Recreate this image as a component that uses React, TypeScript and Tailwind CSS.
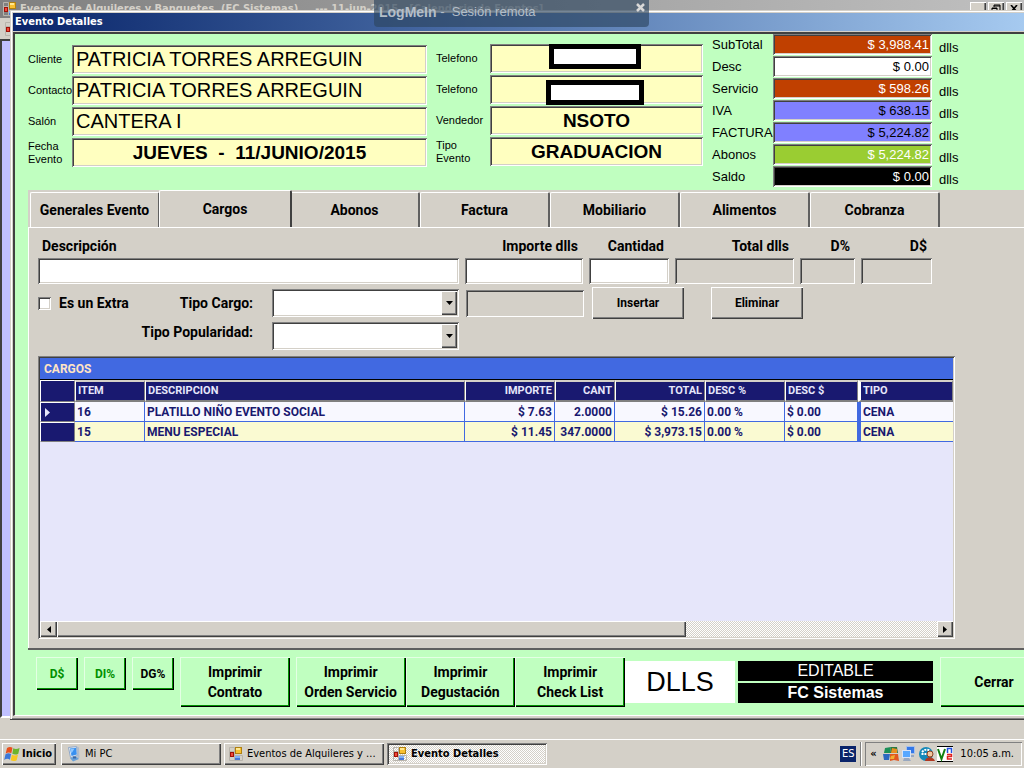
import React from "react";

// classic 3D edges
const raised =
  "bg-[#d4d0c8] shadow-[inset_1px_1px_0_#fff,inset_-1px_-1px_0_#404040,inset_-2px_-2px_0_#808080]";
const sunken =
  "shadow-[inset_1px_1px_0_#808080,inset_-1px_-1px_0_#fff,inset_2px_2px_0_#404040,inset_-2px_-2px_0_#d4d0c8]";
const greenButton =
  "bg-[#c0ffc0] shadow-[inset_1px_1px_0_#e4ffe4,inset_-1px_-1px_0_#000,inset_-2px_-2px_0_#009000]";
const checker = "bg-[repeating-conic-gradient(#fff_0_25%,#d4d0c8_0_50%)] bg-[length:2px_2px]";

const bold = "font-['Roboto','Liberation_Sans',sans-serif] font-bold";
const tahoma = "font-['DejaVu_Sans_Condensed','DejaVu_Sans',sans-serif]";

const clientFields = [
  { id: "cliente", label: "Cliente", value: "PATRICIA TORRES ARREGUIN", style: "pl-[4px] text-[20px]/[24px]" },
  { id: "contacto", label: "Contacto", value: "PATRICIA TORRES ARREGUIN", style: "pl-[4px] text-[20px]/[24px]" },
  { id: "salon", label: "Salón", value: "CANTERA I", style: "pl-[4px] text-[20px]/[24px]" },
  { id: "fecha", label: "Fecha Evento", value: "JUEVES  -  11/JUNIO/2015", style: "text-center text-[19px]/[24px] font-bold" },
];

const saleFields = [
  { id: "tel1", label: "Telefono", value: "", mask: "left-[59px] top-0 w-[92px]" },
  { id: "tel2", label: "Telefono", value: "", mask: "left-[56px] top-[5px] w-[98px]" },
  { id: "vendedor", label: "Vendedor", value: "NSOTO", mask: "" },
  { id: "tipo", label: "Tipo Evento", value: "GRADUACION", mask: "" },
];

const totals = [
  { label: "SubTotal", value: "$ 3,988.41", style: "bg-[#c04000] text-white" },
  { label: "Desc", value: "$ 0.00", style: "bg-white text-black" },
  { label: "Servicio", value: "$ 598.26", style: "bg-[#c04000] text-white" },
  { label: "IVA", value: "$ 638.15", style: "bg-[#8080ff] text-black" },
  { label: "FACTURA", value: "$ 5,224.82", style: "bg-[#8080ff] text-black" },
  { label: "Abonos", value: "$ 5,224.82", style: "bg-[#9acd32] text-white" },
  { label: "Saldo", value: "$ 0.00", style: "bg-black text-white" },
];

const tabs = ["Generales Evento", "Cargos", "Abonos", "Factura", "Mobiliario", "Alimentos", "Cobranza"];

const entryFields = [
  { id: "descripcion", label: "Descripción", style: "flex-1", box: "bg-white", align: "pl-[4px]" },
  { id: "importe", label: "Importe dlls", style: "w-[118px]", box: "bg-white", align: "pr-[5px] text-right" },
  { id: "cantidad", label: "Cantidad", style: "w-[80px]", box: "bg-white", align: "pr-[5px] text-right" },
  { id: "total", label: "Total dlls", style: "w-[119px]", box: "bg-[#d4d0c8]", align: "pr-[5px] text-right" },
  { id: "dpor", label: "D%", style: "w-[55px]", box: "bg-[#d4d0c8]", align: "pr-[5px] text-right" },
  { id: "dpesos", label: "D$", style: "w-[71px]", box: "bg-[#d4d0c8]", align: "pr-[5px] text-right" },
];

const columns = [
  { name: "ITEM", width: "w-[70px]", align: "text-left" },
  { name: "DESCRIPCION", width: "", align: "text-left" },
  { name: "IMPORTE", width: "w-[90px]", align: "text-right" },
  { name: "CANT", width: "w-[60px]", align: "text-right" },
  { name: "TOTAL", width: "w-[90px]", align: "text-right" },
  { name: "DESC %", width: "w-[80px]", align: "text-left" },
  { name: "DESC $", width: "w-[73px]", align: "text-left" },
  { name: "TIPO", width: "w-[95px]", align: "text-left" },
];

const rows = [
  ["16", "PLATILLO NIÑO EVENTO SOCIAL", "$ 7.63", "2.0000", "$ 15.26", "0.00 %", "$ 0.00", "CENA"],
  ["15", "MENU ESPECIAL", "$ 11.45", "347.0000", "$ 3,973.15", "0.00 %", "$ 0.00", "CENA"],
];

const printButtons = [
  ["Imprimir", "Contrato"],
  ["Imprimir", "Orden Servicio"],
  ["Imprimir", "Degustación"],
  ["Imprimir", "Check List"],
];

function AppIcon() {
  return (
    <svg width="14" height="14" viewBox="0 0 14 14" className="shrink-0" aria-hidden="true">
      <path d="M0.500 0.500h5v4h-5zM0.500 4.500h5v9h-5zM5.500 8.500h8v5h-8z" fill="none" stroke="#b8b4ac" />
      <rect x="6.500" y="0.500" width="6" height="6" fill="#f8c030" stroke="#b08010" />
      <rect x="7" y="1" width="4" height="2" fill="#ffe890" />
      <rect x="1" y="5" width="4" height="5" fill="#a01008" />
      <rect x="2" y="6" width="2" height="3" fill="#f04838" />
      <rect x="6" y="9" width="5" height="4" fill="#4878d8" />
      <rect x="6" y="9" width="5" height="2" fill="#80b0f8" />
    </svg>
  );
}

function WindowsFlag() {
  return (
    <svg width="17" height="16" viewBox="0 0 17 16" className="shrink-0" aria-hidden="true">
      <path d="M3 2c2-1.500 4-1.400 5.500-.2L7.300 7.200C5.600 6.100 4 6.200 1.700 7.400z" fill="#e8501c" />
      <path d="M9.300 2.300c1.800 1.100 3.800 1 6.300-.2l-1.300 5.600c-2 1.200-4 1.200-6 .1z" fill="#6cb42c" />
      <path d="M1.500 8.300c2-1.300 3.900-1.200 5.600-.2L5.900 13.700c-1.800-1.200-3.600-1.100-5.700.2z" fill="#3c78d8" />
      <path d="M7.900 8.700c1.900 1.100 3.900 1 6.100-.1l-1.300 5.600c-2 1.200-4 1.200-6 .1z" fill="#f8c820" />
    </svg>
  );
}

function ComputerIcon() {
  return (
    <svg width="15" height="16" viewBox="0 0 15 16" className="shrink-0" aria-hidden="true">
      <path d="M1.500 1.500l8-1 1 9-7 2z" fill="#e8f0f8" stroke="#90a8c8" />
      <path d="M3 2.500l6-.8.800 6.800-5.300 1.500z" fill="#3890f0" />
      <path d="M3.500 3l4-.5-3 5z" fill="#90c8ff" />
      <path d="M10 .5l2 1 .5 10-2 2z" fill="#b0bccc" />
      <path d="M3 12l6-1.500L12 13l-6 2.500z" fill="#68a0d8" />
      <path d="M6 10.500h3v2H6z" fill="#3868a8" />
    </svg>
  );
}

function TrayIcons() {
  return (
    <>
      <svg width="16" height="16" viewBox="0 0 16 16" aria-hidden="true">
        <path d="M2 2l6-1-1 6H1z" fill="#1c9058" />
        <path d="M8 1h6l1 6H7z" fill="#2c7840" />
        <path d="M9 2l5 1v4H8z" fill="#e89020" />
        <path d="M0 8h7l-1 6H1z" fill="#2c68c0" />
        <path d="M7 8h8l1 7-5-1-4 1z" fill="#e05820" />
        <path d="M8 10l4-1-1 4H7z" fill="#f0b030" />
      </svg>
      <svg width="16" height="16" viewBox="0 0 16 16" aria-hidden="true">
        <rect x="5.500" y="0.500" width="8" height="7" fill="#3478e8" stroke="#a8c0e8" />
        <path d="M8 9h5v2H8z" fill="#98a8c0" />
        <rect x="1.500" y="4.500" width="8" height="7" fill="#58a8ff" stroke="#d8e4f8" />
        <path d="M3 12h5l2 3H2z" fill="#98a8c0" />
      </svg>
      <svg width="16" height="16" viewBox="0 0 16 16" aria-hidden="true">
        <circle cx="7" cy="8" r="7" fill="#1488b8" />
        <path d="M3 6c3-3 6-3 8-1M2.500 8h5" stroke="#fff" strokeWidth="2" strokeDasharray="2 1" fill="none" />
        <circle cx="11" cy="8" r="3" fill="#f0c8a0" stroke="#904020" />
        <path d="M6 15c1-5 8-5 10 0z" fill="#b03820" />
      </svg>
      <svg width="16" height="16" viewBox="0 0 16 16" aria-hidden="true">
        <rect width="16" height="16" fill="#fff" />
        <path d="M0 .5h16M0 15.500h16" stroke="#000" />
        <path d="M1 3l3.500 10L8 3" stroke="#108010" strokeWidth="2" fill="none" />
        <path d="M10.500 7V2.500h4V7" stroke="#2050e0" strokeWidth="1.500" fill="none" />
        <path d="M10 8.500h4.500v2h-4V13H15" stroke="#e02020" strokeWidth="1.500" fill="none" />
      </svg>
    </>
  );
}

function ParentWindow() {
  return (
    <div className="absolute inset-x-0 top-0 bottom-[50px] flex flex-col" aria-hidden="true">
      <div className="flex h-[18px] shrink-0 items-start bg-linear-to-r from-[#808080] to-[#c0c0c0] pt-[2px] pl-[3px]">
        <AppIcon />
        <span className={`${tahoma} ml-[3px] whitespace-pre text-[11px]/[14px] font-bold text-[#d4d0c8]`}>
          {"Eventos de Alquileres y Banquetes  (FC Sistemas)     --- 11-jun-2015 - [Calendario de Eventos]"}
        </span>
        <div className="ml-auto flex gap-[2px] pr-[2px]">
          <span className={`${raised} h-[14px] w-[16px]`} />
          <span className={`${raised} flex h-[14px] w-[16px] justify-center pt-[2px]`}>
            <svg width="10" height="9" viewBox="0 0 10 9">
              <path d="M3 1h6v5M3 1v2M1 4h5v4H1zM3 2h6M1 4.500h5" stroke="#000" fill="none" />
            </svg>
          </span>
          <span className={`${raised} flex h-[14px] w-[16px] justify-center pt-[3px]`}>
            <svg width="8" height="7" viewBox="0 0 8 7">
              <path d="M1 0l6 7M7 0L1 7" stroke="#000" strokeWidth="1.600" />
            </svg>
          </span>
        </div>
      </div>
      <div className="flex h-[21px] shrink-0 items-center pl-[5px]">
        <AppIcon />
      </div>
      <div className="flex-1 border-2 border-t-[#404040] border-r-white border-b-white border-l-[#404040] bg-[#c0c0ff]" />
    </div>
  );
}

function RemoteBar() {
  return (
    <div className="absolute top-0 left-[374px] z-20 flex h-[27px] w-[275px] items-start rounded-b bg-[#2c4560]/65 pr-[3px] pl-[5px] font-['Liberation_Sans',sans-serif] text-[#b4bec8]">
      <span className="pt-[4px] text-[14px]/[16px] font-bold">LogMeIn</span>
      <span className="whitespace-pre pt-[4px] text-[13px]/[16px]">{" -  Sesión remota"}</span>
      <button type="button" aria-label="Cerrar sesión" className="ml-auto pt-[3px]">
        <svg width="10" height="9" viewBox="0 0 10 9">
          <path d="M1 1l7 7M8 1L1 8" stroke="#d8d8d8" strokeWidth="2.500" />
        </svg>
      </button>
    </div>
  );
}

function Header() {
  return (
    <div className="flex h-[156px] pl-[13px] font-['Liberation_Sans',sans-serif]">
      <div className="flex min-w-0 flex-[399] flex-col gap-[2px] pt-[11px]">
        {clientFields.map((f) => (
          <div key={f.id} className="flex h-[29px] items-center">
            <label htmlFor={f.id} className="w-[44px] shrink-0 text-[11px]/[13px]">
              {f.label}
            </label>
            <input
              id={f.id}
              readOnly
              defaultValue={f.value}
              className={`${sunken} ${f.style} h-full min-w-0 flex-1 bg-[#ffffc0] outline-none`}
            />
          </div>
        ))}
      </div>
      <div className="ml-[9px] flex min-w-0 flex-[267] flex-col gap-[2px] pt-[10px]">
        {saleFields.map((f) => (
          <div key={f.id} className="flex h-[29px] items-center">
            <label htmlFor={f.id} className="w-[54px] shrink-0 text-[11px]/[13px]">
              {f.label}
            </label>
            <div className="relative h-full min-w-0 flex-1">
              <input
                id={f.id}
                readOnly
                defaultValue={f.value}
                className={`${sunken} size-full bg-[#ffffc0] text-center text-[19px]/[24px] font-bold outline-none`}
              />
              {f.mask && <span className={`${f.mask} absolute h-[25px] border-5 border-black bg-white`} />}
            </div>
          </div>
        ))}
      </div>
      <div className="ml-[9px] flex min-w-0 flex-[220] flex-col gap-px text-[13px]/[16px]">
        {totals.map((t) => (
          <div key={t.label} className="flex h-[21px] items-center">
            <label htmlFor={t.label} className="w-[61px] shrink-0">
              {t.label}
            </label>
            <input
              id={t.label}
              readOnly
              defaultValue={t.value}
              className={`${sunken} ${t.style} h-full min-w-0 flex-1 pr-[3px] text-right outline-none`}
            />
          </div>
        ))}
      </div>
      <div className="w-[92px] shrink-0 pt-[3px] pl-[7px] text-[13px]/[22px]">
        {totals.map((t) => (
          <div key={t.label}>dlls</div>
        ))}
      </div>
    </div>
  );
}

function Combo({ id }: { id: string }) {
  return (
    <div className="relative h-[28px] w-[187px]">
      <select id={id} className={`${sunken} size-full appearance-none bg-white pl-[4px] outline-none`} />
      <span className={`${raised} pointer-events-none absolute inset-y-[2px] right-[2px] flex w-[16px] items-center justify-center`}>
        <svg width="7" height="4" viewBox="0 0 7 4">
          <path d="M0 0h7L3.500 4z" fill="#000" />
        </svg>
      </span>
    </div>
  );
}

function EntryForm() {
  return (
    <div className={`${bold} text-[14px]/[20px]`}>
      <div className="flex gap-[6px] pr-[92px]">
        {entryFields.map((f) => (
          <div key={f.id} className={`${f.style} flex flex-col gap-[2px]`}>
            <label htmlFor={f.id} className={f.align}>
              {f.label}
            </label>
            <input id={f.id} className={`${sunken} ${f.box} h-[26px] w-full px-[4px] outline-none`} />
          </div>
        ))}
      </div>
      <div className="mt-[3px] flex h-[32px] items-center">
        <label className="flex w-[110px] items-center gap-[8px]">
          <input type="checkbox" className={`${sunken} size-[13px] appearance-none bg-white`} />
          Es un Extra
        </label>
        <label htmlFor="tipoCargo" className="w-[105px] text-right">
          Tipo Cargo:
        </label>
        <div className="ml-[19px]">
          <Combo id="tipoCargo" />
        </div>
        <input aria-label="Importe cargo" readOnly className={`${sunken} ml-[7px] h-[27px] w-[118px] bg-[#d4d0c8]`} />
        <button type="button" className={`${raised} ml-[8px] h-[32px] w-[92px] text-[12px]/[16px]`}>
          Insertar
        </button>
        <button type="button" className={`${raised} ml-[27px] h-[32px] w-[92px] text-[12px]/[16px]`}>
          Eliminar
        </button>
      </div>
      <div className="mt-[3px] flex h-[28px] items-start">
        <label htmlFor="tipoPopularidad" className="w-[215px] text-right">
          Tipo Popularidad:
        </label>
        <div className="ml-[19px]">
          <Combo id="tipoPopularidad" />
        </div>
      </div>
    </div>
  );
}

function ChargesGrid() {
  return (
    <div className={`${sunken} ${bold} mt-[6px] mr-[69px] flex flex-1 flex-col bg-[#e6e6fa] p-[2px] text-[12px]/[18px] text-[#191970]`}>
      <div className="h-[22px] border-b border-black bg-[#4169e1] pl-[4px] leading-[22px] text-[#ffe4c4]">CARGOS</div>
      <table className="w-full table-fixed border-separate border-spacing-0">
        <thead>
          <tr className="h-[22px] bg-[#191970] text-[#e6e6fa]">
            <th className="w-[35px] border border-r-[#808080] border-b-[#808080] border-t-white border-l-white" />
            {columns.map((c) => (
              <th
                key={c.name}
                className={`${c.width} ${c.align} overflow-hidden border-t-2 border-r border-b-2 border-l border-t-[#d4d0c8] border-r-[#808080] border-b-[#808080] border-l-white px-[2px] text-[11px]/[16px] ${c.name === "TIPO" ? "border-l-3" : ""}`}
              >
                {c.name}
              </th>
            ))}
          </tr>
        </thead>
        <tbody>
          {rows.map((r, i) => (
            <tr key={r[0]} className={`h-[20px] ${i === 0 ? "bg-[#f8f8ff]" : "bg-[#fafad2]"}`}>
              <td className="border border-t-white border-r-[#808080] border-b-[#808080] border-l-white bg-[#191970] pl-[4px]">
                {i === 0 && (
                  <svg width="5" height="9" viewBox="0 0 5 9">
                    <path d="M0 0l5 4.500L0 9z" fill="#e6e6fa" />
                  </svg>
                )}
              </td>
              {r.map((v, j) => (
                <td
                  key={columns[j].name}
                  className={`${columns[j].align} whitespace-nowrap border-b border-[#4169e1] ${j === 7 ? "border-l-3 pl-[2px]" : "border-r px-[2px]"}`}
                >
                  {v}
                </td>
              ))}
            </tr>
          ))}
        </tbody>
      </table>
      <div className={`${checker} mt-auto flex h-[16px]`}>
        <button type="button" aria-label="Izquierda" className={`${raised} flex w-[17px] items-center justify-center`}>
          <svg width="4" height="7" viewBox="0 0 4 7">
            <path d="M4 0v7L0 3.500z" fill="#000" />
          </svg>
        </button>
        <div className="flex-1">
          <div className={`${raised} h-full w-[71.500%]`} />
        </div>
        <button type="button" aria-label="Derecha" className={`${raised} flex w-[16px] items-center justify-center`}>
          <svg width="4" height="7" viewBox="0 0 4 7">
            <path d="M0 0v7l4-3.500z" fill="#000" />
          </svg>
        </button>
      </div>
    </div>
  );
}

function Footer() {
  return (
    <div className={`${bold} flex h-[65px] items-start overflow-hidden pt-[7px] pl-[21px] text-[14px]/[20px]`}>
      <div className="flex gap-[6px] text-[12px]/[16px]">
        <button type="button" className={`${greenButton} h-[33px] w-[42px] text-[#009000]`}>
          D$
        </button>
        <button type="button" className={`${greenButton} h-[33px] w-[42px] text-[#009000]`}>
          DI%
        </button>
        <button type="button" className={`${greenButton} h-[33px] w-[42px]`}>
          DG%
        </button>
      </div>
      <div className="ml-[6px] flex flex-1">
        {printButtons.map(([a, b], i) => (
          <button key={b} type="button" className={`${greenButton} h-[50px] flex-1 ${i === 0 ? "mr-[6px]" : ""}`}>
            {a}
            <br />
            {b}
          </button>
        ))}
      </div>
      <div className="mt-[4px] h-[42px] w-[110px] bg-white text-center font-['Liberation_Sans',sans-serif] text-[27px]/[42px] font-normal">
        DLLS
      </div>
      <div className="mt-[4px] ml-[3px] flex w-[195px] flex-col gap-[2px] text-center font-['Liberation_Sans',sans-serif] text-[16px]/[20px] text-white">
        <div className="bg-black font-normal">EDITABLE</div>
        <div className="bg-black">FC Sistemas</div>
      </div>
      <button type="button" className={`${greenButton} -mr-[24px] ml-[7px] h-[50px] w-[108px] shrink-0`}>
        Cerrar
      </button>
    </div>
  );
}

function Taskbar() {
  return (
    <div className={`${tahoma} flex h-[29px] items-center border-t border-white px-[2px] text-[11px]/[14px]`}>
      <button type="button" className={`${raised} flex h-[22px] w-[54px] items-center gap-[1px] pl-[2px] font-bold`}>
        <WindowsFlag />
        Inicio
      </button>
      <button type="button" className={`${raised} ml-[5px] flex h-[22px] w-[160px] items-center gap-[3px] pl-[6px]`}>
        <ComputerIcon />
        Mi PC
      </button>
      <button type="button" className={`${raised} ml-[3px] flex h-[22px] w-[160px] items-center gap-[4px] pl-[5px]`}>
        <AppIcon />
        Eventos de Alquileres y ...
      </button>
      <button type="button" className={`${sunken} ${checker} ml-[3px] flex h-[22px] w-[160px] items-center gap-[4px] pl-[6px] font-bold`}>
        <AppIcon />
        Evento Detalles
      </button>
      <span className="ml-auto h-[16px] w-[16px] bg-[#0a246a] text-center leading-[16px] text-white">ES</span>
      <span className="ml-[4px] h-[24px] w-[2px] border-l border-[#808080] bg-white" />
      <div className="ml-[3px] flex h-[24px] items-center gap-[2px] pl-[5px] pr-[8px] shadow-[inset_1px_1px_0_#808080,inset_-1px_-1px_0_#fff]">
        <span className="w-[11px] font-bold">«</span>
        <TrayIcons />
        <span className="ml-[5px]">10:05 a.m.</span>
      </div>
    </div>
  );
}

export default function App() {
  return (
    <div className="relative flex min-h-screen flex-col overflow-hidden bg-[#d4d0c8] text-black">
      <ParentWindow />
      <RemoteBar />
      <main className="relative mt-[10px] ml-[10px] flex flex-1 flex-col border-b border-[#404040] bg-[#d4d0c8] pb-[3px] pl-[3px] shadow-[inset_1px_1px_0_#d4d0c8,inset_2px_2px_0_#fff,inset_0_-1px_0_#808080]">
        <h1 className={`${tahoma} mt-[3px] h-[18px] bg-linear-to-r from-[#0a246a] to-[#a6caf0] pl-[2px] text-[11px]/[18px] font-bold text-white`}>
          Evento Detalles
        </h1>
        <div className="mt-px flex flex-1 flex-col border-t-2 border-b border-l-2 border-t-[#404040] border-b-white border-l-[#404040] bg-[#c0ffc0]">
          <Header />
          <div className="ml-[13px] flex flex-1 flex-col border-b-2 border-[#606060] bg-[#d4d0c8]">
            <nav className={`${bold} flex h-[37px] items-end pl-[2px] text-[14px]/[20px]`}>
              {tabs.map((t) => (
                <button
                  key={t}
                  type="button"
                  className={
                    t === "Cargos"
                      ? "z-10 -mr-[2px] -ml-px h-[37px] w-[133px] rounded-t-xs border-t border-r-2 border-l border-t-white border-r-[#404040] border-l-white bg-[#d4d0c8]"
                      : "h-[35px] w-[130px] rounded-t-xs border-t border-r-2 border-l border-t-white border-r-[#606060] border-l-white"
                  }
                >
                  {t}
                </button>
              ))}
            </nav>
            <div className="flex flex-1 flex-col border-t border-l border-white pt-[8px] pb-[9px] pl-[9px]">
              <EntryForm />
              <ChargesGrid />
            </div>
          </div>
          <Footer />
        </div>
      </main>
      <div className="h-[19px]" />
      <Taskbar />
    </div>
  );
}
